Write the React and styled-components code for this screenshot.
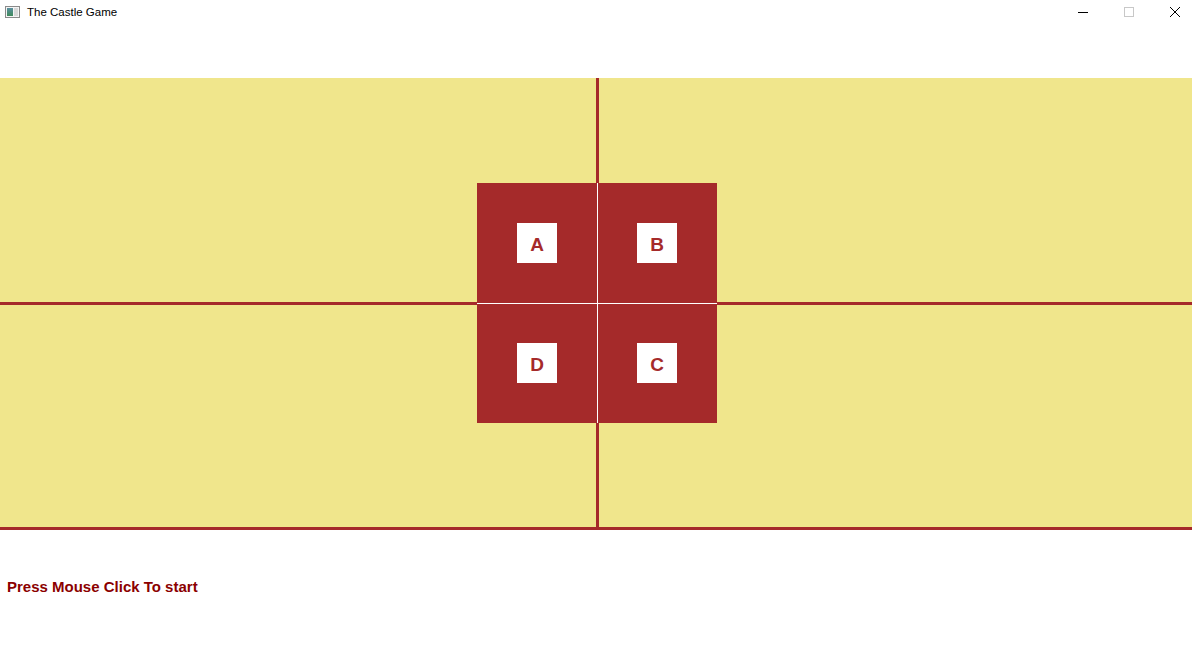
import styled, { createGlobalStyle } from "styled-components";

const GlobalStyle = createGlobalStyle`
  html, body {
    margin: 0;
    padding: 0;
    background: #ffffff;
  }
  body {
    width: 1192px;
    height: 659px;
    overflow: hidden;
    font-family: "Liberation Sans", Arial, sans-serif;
  }
`;

const Window = styled.div`
  width: 1192px;
  height: 659px;
  display: flex;
  flex-direction: column;
  background: #ffffff;
  overflow: hidden;
`;

const TitleBar = styled.div`
  height: 24px;
  display: flex;
  align-items: center;
  padding-left: 5px;
`;

const Title = styled.span`
  margin-left: 6px;
  font-size: 11.5px;
  color: #000000;
`;

const Controls = styled.div`
  margin-left: auto;
  margin-right: -6px;
  display: flex;
  height: 24px;
`;

const ControlButton = styled.div`
  width: 46px;
  display: flex;
  align-items: center;
  justify-content: center;
`;

const Field = styled.div`
  position: relative;
  margin-top: 54px;
  display: grid;
  grid-template-columns: 596px 3px 1fr;
  grid-template-rows: 224px 3px 1fr;
  height: 449px;
  background: #f0e68c;
  border-bottom: 3px solid #a52a2a;
`;

const Line = styled.div`
  background: #a52a2a;
  grid-column: ${(p) => p.$col};
  grid-row: ${(p) => p.$row};
`;

const Castle = styled.div`
  position: absolute;
  left: 477px;
  top: 105px;
  display: grid;
  grid-template-columns: 120px 119px;
  grid-template-rows: 120px 119px;
  gap: 1px;
  background: #ffffff;
`;

const Tower = styled.div`
  background: #a52a2a;
  padding: ${(p) => p.$top}px 0 0 ${(p) => p.$left}px;
`;

const Label = styled.div`
  width: 40px;
  height: 40px;
  box-sizing: border-box;
  padding-top: 3px;
  background: #ffffff;
  color: #a52a2a;
  font-weight: bold;
  font-size: 19px;
  display: flex;
  align-items: center;
  justify-content: center;
`;

const Status = styled.div`
  padding: 48px 0 0 7px;
  color: #8b0000;
  font-weight: bold;
  font-size: 15px;
  line-height: 17px;
`;

function AppIcon() {
  return (
    <svg width="16" height="14" viewBox="0 0 16 14">
      <defs>
        <linearGradient id="g" x1="0" y1="0" x2="0" y2="1">
          <stop offset="0" stopColor="#5a8fa0" />
          <stop offset="1" stopColor="#3f8a5a" />
        </linearGradient>
      </defs>
      <rect x="0.5" y="1.5" width="14" height="11" fill="#f4f4f4" stroke="#8a8a8a" />
      <rect x="2" y="3" width="6" height="8" fill="url(#g)" />
      <rect x="9" y="3" width="4" height="8" fill="#d8d8d8" />
    </svg>
  );
}

const towers = [
  { name: "A", top: 40, left: 40 },
  { name: "B", top: 40, left: 39 },
  { name: "D", top: 39, left: 40 },
  { name: "C", top: 39, left: 39 },
];

export default function App() {
  return (
    <>
      <GlobalStyle />
      <Window>
        <TitleBar>
          <AppIcon />
          <Title>The Castle Game</Title>
          <Controls>
            <ControlButton>
              <svg width="10" height="10" viewBox="0 0 10 10">
                <line x1="0" y1="5.5" x2="10" y2="5.5" stroke="#000" strokeWidth="1" />
              </svg>
            </ControlButton>
            <ControlButton>
              <svg width="10" height="10" viewBox="0 0 10 10">
                <rect x="0.5" y="0.5" width="9" height="9" fill="none" stroke="#c8c8c8" />
              </svg>
            </ControlButton>
            <ControlButton>
              <svg width="10" height="10" viewBox="0 0 10 10">
                <path d="M0 0 L10 10 M10 0 L0 10" stroke="#000" strokeWidth="1" />
              </svg>
            </ControlButton>
          </Controls>
        </TitleBar>
        <Field>
          <Line $col="2" $row="1 / 4" />
          <Line $col="1 / 4" $row="2" />
          <Castle>
            {towers.map((t) => (
              <Tower key={t.name} $top={t.top} $left={t.left}>
                <Label>{t.name}</Label>
              </Tower>
            ))}
          </Castle>
        </Field>
        <Status>Press Mouse Click To start</Status>
      </Window>
    </>
  );
}
